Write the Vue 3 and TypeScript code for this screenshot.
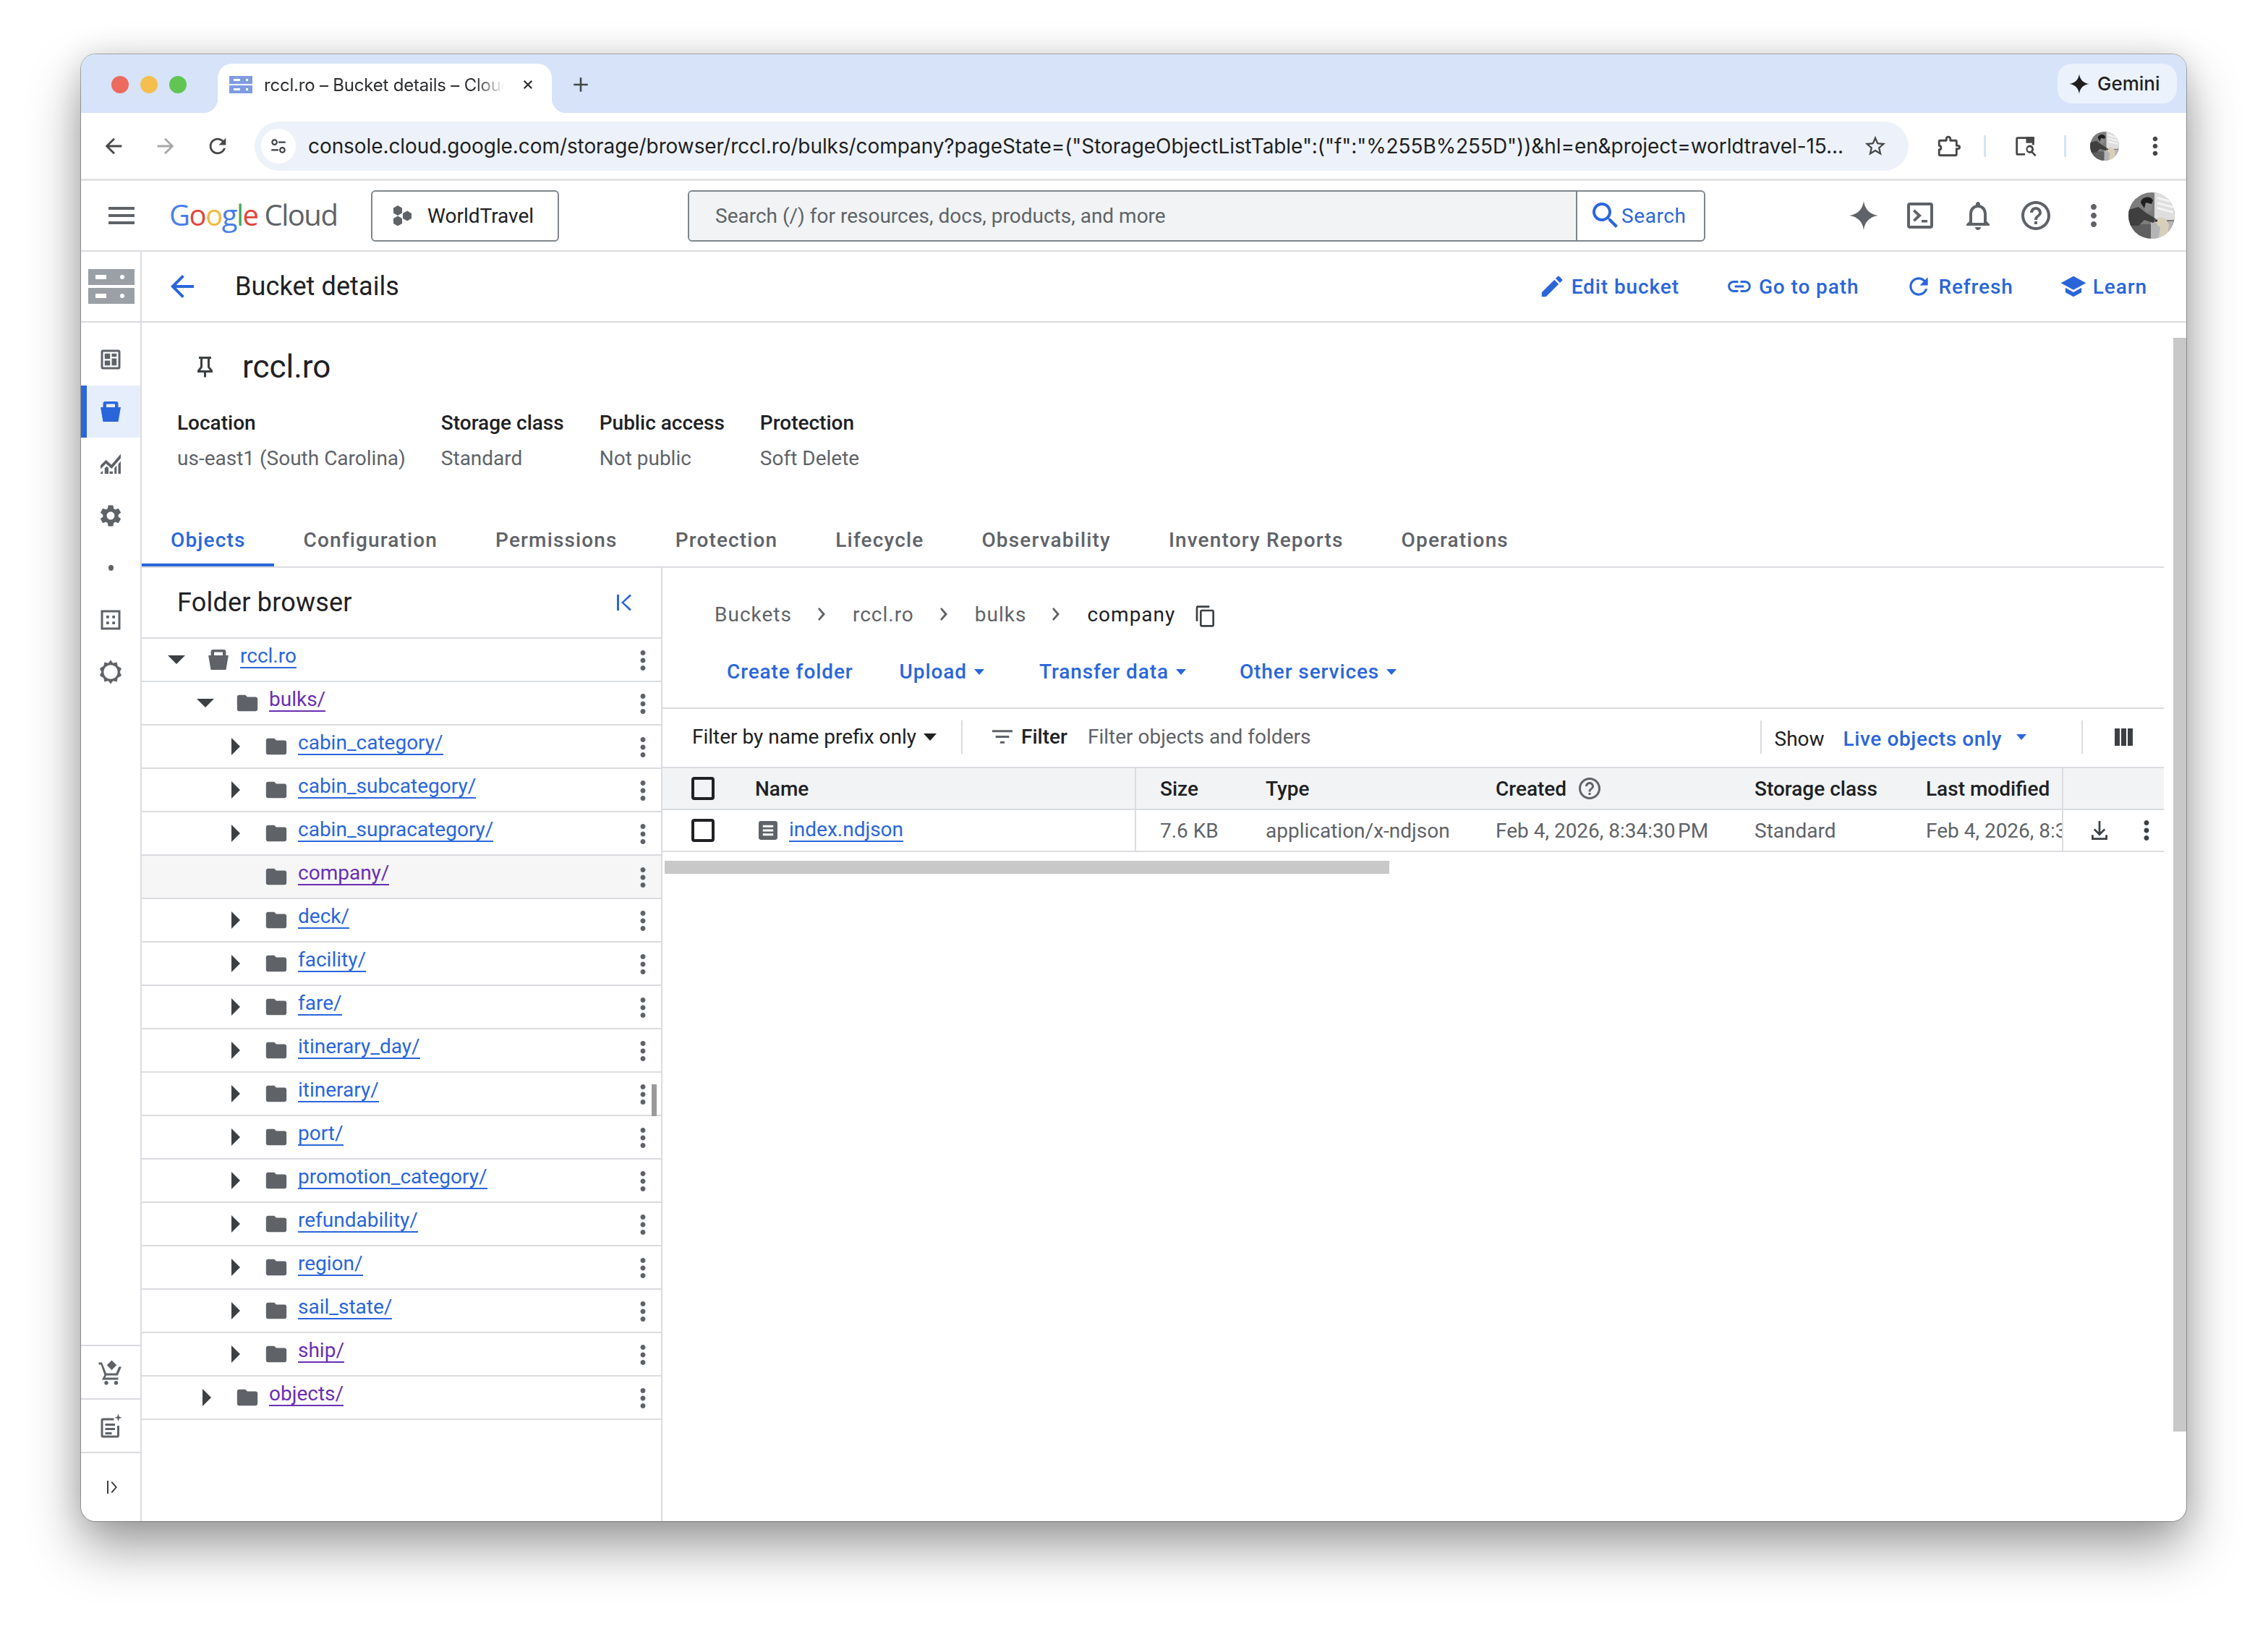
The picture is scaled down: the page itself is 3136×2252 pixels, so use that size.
<script setup lang="ts">
interface TreeRow {
  name: string
  level: number
  arrow: 'down' | 'right' | 'none'
  visited?: boolean
  selected?: boolean
  bucket?: boolean
}

const icons: Record<string, string> = {
  menu: 'M3 18h18v-2H3v2zm0-5h18v-2H3v2zm0-7v2h18V6H3z',
  back: 'M20 11H7.83l5.59-5.59L12 4l-8 8 8 8 1.41-1.41L7.83 13H20v-2z',
  forward: 'M4 11h12.17l-5.59-5.59L12 4l8 8-8 8-1.41-1.41L16.17 13H4v-2z',
  reload: 'M17.65 6.35C16.2 4.9 14.21 4 12 4c-4.42 0-7.99 3.58-7.99 8s3.57 8 7.99 8c3.73 0 6.84-2.55 7.73-6h-2.08c-.82 2.33-3.04 4-5.65 4-3.31 0-6-2.69-6-6s2.69-6 6-6c1.66 0 3.14.69 4.22 1.78L13 11h7V4l-2.35 2.35z',
  more: 'M12 8c1.1 0 2-.9 2-2s-.9-2-2-2-2 .9-2 2 .9 2 2 2zm0 2c-1.1 0-2 .9-2 2s.9 2 2 2 2-.9 2-2-.9-2-2-2zm0 6c-1.1 0-2 .9-2 2s.9 2 2 2 2-.9 2-2-.9-2-2-2z',
  folder: 'M10 4H4c-1.1 0-2 .9-2 2v12c0 1.1.9 2 2 2h16c1.1 0 2-.9 2-2V8c0-1.1-.9-2-2-2h-8l-2-2z',
  search: 'M15.5 14h-.79l-.28-.27C15.41 12.59 16 11.11 16 9.5 16 5.91 13.09 3 9.5 3S3 5.91 3 9.5 5.91 16 9.5 16c1.61 0 3.09-.59 4.23-1.57l.27.28v.79l5 4.99L20.49 19l-4.99-5zm-6 0C7.01 14 5 11.99 5 9.5S7.01 5 9.5 5 14 7.01 14 9.5 11.99 14 9.5 14z',
  edit: 'M3 17.25V21h3.75L17.81 9.94l-3.75-3.75L3 17.25zM20.71 7.04c.39-.39.39-1.02 0-1.41l-2.34-2.34c-.39-.39-1.02-.39-1.41 0l-1.83 1.83 3.75 3.75 1.83-1.83z',
  link: 'M3.9 12c0-1.71 1.39-3.1 3.1-3.1h4V7H7c-2.76 0-5 2.24-5 5s2.24 5 5 5h4v-1.9H7c-1.71 0-3.1-1.39-3.1-3.1zM8 13h8v-2H8v2zm9-6h-4v1.9h4c1.71 0 3.1 1.39 3.1 3.1s-1.39 3.1-3.1 3.1h-4V17h4c2.76 0 5-2.24 5-5s-2.24-5-5-5z',
  school: 'M5 13.18v4L12 21l7-3.82v-4L12 17l-7-3.82zM12 3L1 9l11 6 11-6L12 3z',
  bell: 'M12 22c1.1 0 2-.9 2-2h-4c0 1.1.9 2 2 2zm6-6v-5c0-3.07-1.63-5.64-4.5-6.32V4c0-.83-.67-1.5-1.5-1.5s-1.5.67-1.5 1.5v.68C7.64 5.36 6 7.92 6 11v5l-2 2v1h16v-1l-2-2zm-2 1H8v-6c0-2.48 1.51-4.5 4-4.5s4 2.02 4 4.5v6z',
  help: 'M11 18h2v-2h-2v2zm1-16C6.48 2 2 6.48 2 12s4.48 10 10 10 10-4.48 10-10S17.52 2 12 2zm0 18c-4.41 0-8-3.59-8-8s3.59-8 8-8 8 3.59 8 8-3.59 8-8 8zm0-14c-2.21 0-4 1.79-4 4h2c0-1.1.9-2 2-2s2 .9 2 2c0 2-3 1.75-3 5h2c0-2.25 3-2.5 3-5 0-2.21-1.79-4-4-4z',
  pin: 'M3 0h17v3h-2v11l4 5v3H13v6l-1.500 1L10 28v-6H1v-3l4-5V3H3zM8 3v12l-3 4h13l-3-4V3z',
  gear: 'M19.14 12.94c.04-.3.06-.61.06-.94 0-.32-.02-.64-.07-.94l2.03-1.58c.18-.14.23-.41.12-.61l-1.92-3.32c-.12-.22-.37-.29-.59-.22l-2.39.96c-.5-.38-1.03-.7-1.62-.94l-.36-2.54c-.04-.24-.24-.41-.48-.41h-3.84c-.24 0-.43.17-.47.41l-.36 2.54c-.59.24-1.13.57-1.62.94l-2.39-.96c-.22-.08-.47 0-.59.22L2.74 8.87c-.12.21-.08.47.12.61l2.03 1.58c-.05.3-.09.63-.09.94s.02.64.07.94l-2.03 1.58c-.18.14-.23.41-.12.61l1.92 3.32c.12.22.37.29.59.22l2.39-.96c.5.38 1.03.7 1.62.94l.36 2.54c.05.24.24.41.48.41h3.84c.24 0 .44-.17.47-.41l.36-2.54c.59-.24 1.13-.56 1.62-.94l2.39.96c.22.08.47 0 .59-.22l1.92-3.32c.12-.22.07-.47-.12-.61l-2.01-1.58zM12 15.6c-1.98 0-3.6-1.62-3.6-3.6s1.62-3.6 3.6-3.6 3.6 1.62 3.6 3.6-1.62 3.6-3.6 3.6z',
  download: 'M11 3h2v11.2l3.6-3.6L18 12l-6 6-6-6 1.4-1.4 3.6 3.6zM4 17h2v3h12v-3h2v5H4z',
  filter: 'M10 18h4v-2h-4v2zM3 6v2h18V6H3zm3 7h12v-2H6v2z',
  copy: 'M16 1H4c-1.1 0-2 .9-2 2v14h2V3h12V1zm3 4H8c-1.1 0-2 .9-2 2v14c0 1.1.9 2 2 2h11c1.1 0 2-.9 2-2V7c0-1.1-.9-2-2-2zm0 16H8V7h11v14z',
  file: 'M19 3H5c-1.1 0-2 .9-2 2v14c0 1.1.9 2 2 2h14c1.1 0 2-.9 2-2V5c0-1.1-.9-2-2-2zm-2 14H7v-2h10v2zm0-4H7v-2h10v2zm0-4H7V7h10v2z',
  star: 'M22 9.24l-7.19-.62L12 2 9.19 8.63 2 9.24l5.46 4.73L5.82 21 12 17.27 18.18 21l-1.63-7.03L22 9.24zM12 15.4l-3.76 2.27 1-4.28-3.32-2.88 4.38-.38L12 6.1l1.71 4.04 4.38.38-3.32 2.88 1 4.28L12 15.4z',
  spark: 'M12 1c.7 6.3 4.7 10.3 11 11-6.3.7-10.3 4.7-11 11-.7-6.3-4.7-10.3-11-11 6.3-.7 10.3-4.7 11-11z',
  bucket: 'M7 2.670h10a2 2 0 0 1 2 2V8h2.330l-2.330 13.330H5L2.670 8H5V4.670a2 2 0 0 1 2-2zM8 5v3h8V5z',
  dashboard: 'M5 3h14a2 2 0 0 1 2 2v14a2 2 0 0 1-2 2H5a2 2 0 0 1-2-2V5a2 2 0 0 1 2-2zM5 5h14v14H5zM6.500 6.500h5v5h-5zM13 6.500h4.500v3H13zM13 11h4.500v6.500H13zM6.500 13h5v4.500h-5z',
  chart: 'M2.700 13.500l5-5 5 4.500 8.600-10v4l-8.400 9.700-5.200-4.700-5 5zM2.700 20.500l2-2v2.800h-2zM6.500 16l2-1.500 1.500 1.400v5.400H6.500zM11 19.200h3v2.100h-3zM15.500 16l2-2.300v7.600h-2zM19 12.300l2.300-2.600v11.600H19z',
  grid: 'M3 3h18v18H3zm2 2v14h14V5zm3 3h2.500v2.500H8zm5.500 0H16v2.500h-2.500zM8 13.500h2.500V16H8zm5.500 0H16V16h-2.500z',
  sun: 'M12 1l2.200 2.800 3.500-.800.800 3.500L22 8.700 20.500 12l1.500 3.300-3.500 2.200-.800 3.500-3.500-.800L12 23l-2.200-2.800-3.500.800-.800-3.500L2 15.300 3.500 12 2 8.700l3.500-2.200.800-3.500 3.500.800zm0 4.500a6.500 6.500 0 1 0 0 13 6.500 6.500 0 0 0 0-13z',
  cart: 'M13 1l4.500 4.500L13 10 8.500 5.500zM1 3h3l4 10h9l2.500-6H22l-3.500 8H8l-1 2h12v2H4l2.300-4.500L3 5H1zM8 20a1.800 1.800 0 1 1 0 3.600A1.800 1.800 0 0 1 8 20zm9 0a1.800 1.800 0 1 1 0 3.600 1.800 1.800 0 0 1 0-3.600z',
  notes: 'M5 5h10v2H5v14h13v-9h2v9a2 2 0 0 1-2 2H5a2 2 0 0 1-2-2V7a2 2 0 0 1 2-2zm2 5h9v2H7zm0 4h9v2H7zm0 4h6v2H7zM19 1l.9 2.600L22.500 4.500l-2.600.9L19 8l-.9-2.600-2.600-.9 2.600-.9z'
}

const railTop = [
  { icon: 'dashboard' },
  { icon: 'bucket', active: true },
  { icon: 'chart' },
  { icon: 'gear' },
  { icon: 'dot' },
  { icon: 'grid' },
  { icon: 'sun' }
]

const details = [
  { label: 'Location', value: 'us-east1 (South Carolina)' },
  { label: 'Storage class', value: 'Standard' },
  { label: 'Public access', value: 'Not public' },
  { label: 'Protection', value: 'Soft Delete' }
]

const tabs = ['Objects', 'Configuration', 'Permissions', 'Protection', 'Lifecycle', 'Observability', 'Inventory Reports', 'Operations']

const pageActions = [
  { icon: 'edit', label: 'Edit bucket' },
  { icon: 'link', label: 'Go to path' },
  { icon: 'reload', label: 'Refresh' },
  { icon: 'school', label: 'Learn' }
]

const logoLetters = [
  { ch: 'G', color: '#4a7fe8' },
  { ch: 'o', color: '#e0473c' },
  { ch: 'o', color: '#f4b93f' },
  { ch: 'g', color: '#4a7fe8' },
  { ch: 'l', color: '#45a85c' },
  { ch: 'e', color: '#e0473c' }
]

const tree: TreeRow[] = [
  { name: 'rccl.ro', level: 0, arrow: 'down', bucket: true },
  { name: 'bulks/', level: 1, arrow: 'down', visited: true },
  { name: 'cabin_category/', level: 2, arrow: 'right' },
  { name: 'cabin_subcategory/', level: 2, arrow: 'right' },
  { name: 'cabin_supracategory/', level: 2, arrow: 'right' },
  { name: 'company/', level: 2, arrow: 'none', visited: true, selected: true },
  { name: 'deck/', level: 2, arrow: 'right' },
  { name: 'facility/', level: 2, arrow: 'right' },
  { name: 'fare/', level: 2, arrow: 'right' },
  { name: 'itinerary_day/', level: 2, arrow: 'right' },
  { name: 'itinerary/', level: 2, arrow: 'right' },
  { name: 'port/', level: 2, arrow: 'right' },
  { name: 'promotion_category/', level: 2, arrow: 'right' },
  { name: 'refundability/', level: 2, arrow: 'right' },
  { name: 'region/', level: 2, arrow: 'right' },
  { name: 'sail_state/', level: 2, arrow: 'right' },
  { name: 'ship/', level: 2, arrow: 'right', visited: true },
  { name: 'objects/', level: 1, arrow: 'right', visited: true }
]

const crumbs = ['Buckets', 'rccl.ro', 'bulks']
const objectActions = [
  { label: 'Upload', gap: 64 },
  { label: 'Transfer data', gap: 76 },
  { label: 'Other services', gap: 74 }
]
// Chrome formats the time with a narrow no-break space before PM
const stamp = 'Feb 4, 2026, 8:34:30\u202fPM'
</script>

<template>
  <div class="page">
    <div class="window">
      <div class="tabstrip">
        <div class="lights">
          <i class="light red"></i><i class="light amber"></i><i class="light green"></i>
        </div>
        <div class="tab">
          <svg class="tab-icon" viewBox="0 0 32 24">
            <path fill="#7f9ce0" d="M0 0h32v11H0zM0 13h32v11H0z" />
            <path fill="#fff" d="M6 4h9v3H6zM6 17h9v3H6zM23 4h3v3h-3zM23 17h3v3h-3z" />
          </svg>
          <span class="tab-title">rccl.ro – Bucket details – Cloud Storage</span>
          <svg class="tab-close" viewBox="0 0 24 24"><path d="M5 5l14 14M19 5L5 19" /></svg>
        </div>
        <svg class="tab-plus" viewBox="0 0 24 24"><path d="M12 3v18M3 12h18" /></svg>
        <div class="gemini">
          <svg viewBox="0 0 24 24"><path :d="icons.spark" /></svg>
          <span>Gemini</span>
        </div>
      </div>

      <div class="toolbar">
        <svg class="tb-icon" viewBox="0 0 24 24"><path :d="icons.back" /></svg>
        <svg class="tb-icon off" viewBox="0 0 24 24"><path :d="icons.forward" /></svg>
        <svg class="tb-icon" viewBox="0 0 24 24"><path :d="icons.reload" /></svg>
        <div class="omnibox">
          <span class="tune">
            <svg viewBox="0 0 24 24">
              <circle cx="7" cy="7" r="3" fill="none" stroke="#3c4043" stroke-width="2" />
              <circle cx="17" cy="17" r="3" fill="none" stroke="#3c4043" stroke-width="2" />
              <path fill="#3c4043" d="M12 6h9v2h-9zM3 16h9v2H3z" />
            </svg>
          </span>
          <span class="url">console.cloud.google.com/storage/browser/rccl.ro/bulks/company?pageState=("StorageObjectListTable":("f":"%255B%255D"))&amp;hl=en&amp;project=worldtravel-15...</span>
          <svg class="omni-star" viewBox="0 0 24 24"><path :d="icons.star" /></svg>
        </div>
        <svg class="ext" viewBox="0 0 24 24">
          <path d="M4 6.500h6V5a2 2 0 0 1 4 0v1.500h5a1 1 0 0 1 1 1v4h1.500a1.500 1.500 0 0 1 0 3H20V20a1 1 0 0 1-1 1H4a1 1 0 0 1-1-1v-4.500c2.500 0 2.500-4 0-4V7.500a1 1 0 0 1 1-1z" />
        </svg>
        <i class="tb-sep"></i>
        <svg class="tb-icon tabsearch" viewBox="0 0 24 24">
          <path d="M3 5a2 2 0 0 1 2-2h16v8h-2V5H5v14h7v2H5a2 2 0 0 1-2-2z" />
          <path d="M13 3h8v6h-8z" />
          <path d="M16.500 11a4 4 0 0 1 3.200 6.400L23 20.700 21.700 22l-3.300-3.300A4 4 0 1 1 16.500 11zm0 2a2 2 0 1 0 0 4 2 2 0 0 0 0-4z" />
        </svg>
        <i class="tb-sep second"></i>
        <svg class="avatar small" viewBox="0 0 64 64">
          <g id="user-photo">
            <rect width="64" height="64" fill="#7d7d7d" />
            <path fill="#dedede" d="M36 0h28v38H36z" />
            <path fill="#f4f4f4" d="M40 6l22 6v3l-22-6zM40 13l22 6v3l-22-6zM40 20l22 6v3l-22-6z" />
            <path fill="#b4b4b4" d="M31 40h33v24H31z" />
            <path fill="#5f5f5f" d="M0 44h31v20H0z" />
            <path fill="#3f3f3f" d="M0 24l14-4 10 8 10 6 6 4-6 4-12-4-8 8H0z" />
            <path fill="#8a8a8a" d="M24 12l9 2-1 10-7 4-5-8z" />
            <path fill="#1e1e1e" d="M17 14a9 8 0 0 1 17-3l-2 5-8-2-2 8z" />
            <path fill="#d8cfbb" d="M36 38l8-4 8 3 4 8-2 17H42l2-14-4-3z" />
            <path fill="#2f2f2f" d="M37 37.500h3v3h-3z" />
          </g>
        </svg>
        <svg class="tb-icon dots" viewBox="0 0 24 24"><path :d="icons.more" /></svg>
      </div>

      <header class="gcp-bar">
        <svg class="gcp-menu" viewBox="0 0 24 24"><path :d="icons.menu" /></svg>
        <div class="logo">
          <span v-for="(l, i) in logoLetters" :key="i" :style="{ color: l.color }">{{ l.ch }}</span>
          <span class="logo-cloud">Cloud</span>
        </div>
        <div class="project">
          <svg viewBox="0 0 26 28">
            <path fill="#5f6368" d="M7 0l6 3.500v7L7 14l-6-3.500v-7zM7 14.500l6 3.500v7L7 28.500l-6-3.500v-7zM20 7.500l6 3.500v7l-6 3.500-6-3.500v-7z" />
          </svg>
          <span>WorldTravel</span>
        </div>
        <div class="searchbox">
          <div class="search-input">Search (/) for resources, docs, products, and more</div>
          <div class="search-btn">
            <svg viewBox="3 3 18 18"><path :d="icons.search" /></svg>
            <span>Search</span>
          </div>
        </div>
        <div class="gcp-icons">
          <svg class="gi spark" viewBox="0 0 24 24"><path :d="icons.spark" /></svg>
          <svg class="gi" viewBox="0 0 24 24">
            <path d="M5 3h14a2 2 0 0 1 2 2v14a2 2 0 0 1-2 2H5a2 2 0 0 1-2-2V5a2 2 0 0 1 2-2zm0 2v14h14V5z" />
            <path d="M7 9l1.300-1.300L13 12l-4.700 4.300L7 15l3-3zM13 15h4v1.800h-4z" />
          </svg>
          <svg class="gi" viewBox="0 0 24 24"><path :d="icons.bell" /></svg>
          <svg class="gi" viewBox="0 0 24 24"><path :d="icons.help" /></svg>
          <svg class="gi" viewBox="0 0 24 24"><path :d="icons.more" /></svg>
        </div>
        <svg class="avatar large" viewBox="0 0 64 64"><use href="#user-photo" /></svg>
      </header>

      <div class="console">
        <aside class="rail">
          <div class="rail-logo">
            <svg viewBox="0 0 64 48">
              <path fill="#9aa0a6" d="M0 0h64v22H0zM0 26h64v22H0z" />
              <path fill="#fff" d="M10 8h15v6H10zM10 34h15v6H10z" />
              <circle cx="47" cy="11" r="3" fill="#fff" /><circle cx="47" cy="37" r="3" fill="#fff" />
            </svg>
          </div>
          <div class="rail-nav">
            <div v-for="item in railTop" :key="item.icon" class="rail-item" :class="{ active: item.active }">
              <i v-if="item.icon === 'dot'" class="rail-dot"></i>
              <svg v-else viewBox="0 0 24 24"><path fill-rule="evenodd" :d="icons[item.icon]" /></svg>
            </div>
          </div>
          <div class="rail-bottom">
            <div class="rail-foot"><svg viewBox="0 0 24 24"><path :d="icons.cart" /></svg></div>
            <div class="rail-foot"><svg viewBox="0 0 24 24"><path :d="icons.notes" /></svg></div>
            <div class="rail-foot last">
              <svg class="expand" viewBox="0 0 20 20"><path d="M2 1h2v18H2zM9 2l7 8-7 8-1.500-1.300L13.500 10 7.500 3.300z" /></svg>
            </div>
          </div>
        </aside>

        <main class="main">
          <div class="subhead">
            <svg class="sub-back" viewBox="4 4 16 16"><path :d="icons.back" /></svg>
            <h1 class="sub-title">Bucket details</h1>
            <div class="sub-actions">
              <div v-for="a in pageActions" :key="a.label" class="sub-action">
                <svg viewBox="0 0 24 24"><path :d="icons[a.icon]" /></svg>
                <span>{{ a.label }}</span>
              </div>
            </div>
          </div>

          <div class="scroller">
            <div class="content">
              <div class="bucket-name">
                <svg viewBox="0 0 23 29"><path fill-rule="evenodd" :d="icons.pin" /></svg>
                <h2>rccl.ro</h2>
              </div>
              <div class="details">
                <div v-for="d in details" :key="d.label" class="detail">
                  <div class="detail-label">{{ d.label }}</div>
                  <div class="detail-value">{{ d.value }}</div>
                </div>
              </div>
              <nav class="tabs">
                <div v-for="(t, i) in tabs" :key="t" class="tab-link" :class="{ current: i === 0 }">{{ t }}</div>
              </nav>

              <div class="split">
                <section class="browser">
                  <div class="browser-head">
                    <h3>Folder browser</h3>
                    <svg viewBox="0 0 26 24"><path d="M2 1h3v22H2zM22 2.500L11.500 12 22 21.500l-2 1.900L8 12 20 .6z" /></svg>
                  </div>
                  <div class="tree">
                    <div
                      v-for="row in tree"
                      :key="row.name"
                      class="tree-row"
                      :class="{ selected: row.selected }"
                      :style="{ paddingLeft: 24 + row.level * 40 + 'px' }"
                    >
                      <span class="twist">
                        <svg v-if="row.arrow === 'down'" class="tri-down" viewBox="0 0 24 12"><path d="M0 0h24L12 12z" /></svg>
                        <svg v-else-if="row.arrow === 'right'" class="tri-right" viewBox="0 0 12 24"><path d="M0 0l12 12L0 24z" /></svg>
                      </span>
                      <svg v-if="row.bucket" class="node bucket-node" viewBox="2.600 2.600 18.800 18.800"><path fill-rule="evenodd" :d="icons.bucket" /></svg>
                      <svg v-else class="node" viewBox="0 0 24 24"><path :d="icons.folder" /></svg>
                      <a class="node-link" :class="{ visited: row.visited }">{{ row.name }}</a>
                      <svg class="node-more" viewBox="0 0 24 24"><path :d="icons.more" /></svg>
                    </div>
                    <i class="tree-thumb"></i>
                  </div>
                </section>

                <section class="objects">
                  <div class="crumbs">
                    <template v-for="c in crumbs" :key="c">
                      <span class="crumb">{{ c }}</span>
                      <svg class="crumb-sep" viewBox="0 0 12 20"><path d="M2 1l8 9-8 9-2-1.700L6 10 0 2.700z" /></svg>
                    </template>
                    <span class="crumb now">company</span>
                    <svg class="crumb-copy" viewBox="0 0 24 24"><path :d="icons.copy" /></svg>
                  </div>
                  <div class="obj-actions">
                    <span class="obj-action">Create folder</span>
                    <span v-for="a in objectActions" :key="a.label" class="obj-action drop" :style="{ marginLeft: a.gap + 'px' }">
                      {{ a.label }}<i class="caret"></i>
                    </span>
                  </div>
                  <div class="filterbar">
                    <span class="prefix">Filter by name prefix only</span><i class="caret dark"></i>
                    <i class="fb-sep"></i>
                    <svg class="filter-icon" viewBox="3 6 18 12"><path :d="icons.filter" /></svg>
                    <span class="filter-label">Filter</span>
                    <span class="filter-hint">Filter objects and folders</span>
                    <i class="fb-sep push"></i>
                    <span class="show">Show</span>
                    <span class="live">Live objects only</span><i class="caret live-caret"></i>
                    <i class="fb-sep last"></i>
                    <svg class="columns" viewBox="0 0 25 24"><path d="M0 0h7v24H0zM9 0h7v24H9zM18 0h7v24h-7z" /></svg>
                  </div>
                  <div class="table">
                    <div class="tr th">
                      <div class="cell check"><i class="box"></i></div>
                      <div class="cell name sep">Name</div>
                      <div class="cell pad">Size</div>
                      <div class="cell pad">Type</div>
                      <div class="cell pad">Created<svg class="help" viewBox="2 2 20 20"><path :d="icons.help" /></svg></div>
                      <div class="cell pad">Storage class</div>
                      <div class="cell pad sep">Last modified</div>
                      <div class="cell"></div>
                    </div>
                    <div class="tr td">
                      <div class="cell check"><i class="box"></i></div>
                      <div class="cell name sep">
                        <svg class="file-icon" viewBox="3 3 18 18"><path :d="icons.file" /></svg>
                        <a class="node-link">index.ndjson</a>
                      </div>
                      <div class="cell pad">7.6 KB</div>
                      <div class="cell pad">application/x-ndjson</div>
                      <div class="cell pad">{{ stamp }}</div>
                      <div class="cell pad">Standard</div>
                      <div class="cell pad sep">{{ stamp }}</div>
                      <div class="cell tools">
                        <svg class="dl" viewBox="4 3 16 19"><path :d="icons.download" /></svg>
                        <svg class="row-more" viewBox="0 0 24 24"><path :d="icons.more" /></svg>
                      </div>
                    </div>
                  </div>
                  <div class="hbar"></div>
                </section>
              </div>
            </div>
            <div class="vbar"></div>
          </div>
        </main>
      </div>
    </div>
  </div>
</template>

<style scoped>
.page {
  padding: 75px 0 148px 112px;
  font-family: Roboto, "Liberation Sans", sans-serif;
  color: #202124;
}

.window {
  width: 2911px;
  height: 2028px;
  border-radius: 20px;
  overflow: hidden;
  background: #fff;
  display: flex;
  flex-direction: column;
  box-shadow: 0 0 0 1px rgba(0, 0, 0, 0.28), 0 36px 72px rgba(0, 0, 0, 0.38), 0 0 40px rgba(0, 0, 0, 0.12);
}

svg {
  display: block;
  flex: none;
  fill: currentColor;
}

/* browser tabs */
.tabstrip {
  height: 81px;
  flex: none;
  background: #d6e3f9;
  display: flex;
  position: relative;
}

.lights {
  display: flex;
  gap: 16px;
  padding: 30px 0 0 42px;
  width: 189px;
  box-sizing: border-box;
}

.light {
  width: 24px;
  height: 24px;
  border-radius: 50%;
}

.red { background: #ed6a5e; }
.amber { background: #f5bf4f; }
.green { background: #61c554; }

.tab {
  width: 462px;
  height: 68px;
  margin-top: 13px;
  background: #fff;
  border-radius: 20px 20px 0 0;
  display: flex;
  align-items: center;
  padding: 0 24px 10px 16px;
  box-sizing: border-box;
  position: relative;
}

.tab::before,
.tab::after {
  content: '';
  position: absolute;
  bottom: 0;
  width: 20px;
  height: 20px;
}

.tab::before {
  left: -20px;
  background: radial-gradient(circle at 0 0, #d6e3f9 20px, #fff 20.5px);
}

.tab::after {
  right: -20px;
  background: radial-gradient(circle at 100% 0, #d6e3f9 20px, #fff 20.5px);
}

.tab-icon {
  width: 32px;
  height: 24px;
}

.tab-title {
  margin-left: 16px;
  width: 335px;
  font-family: Inter, sans-serif;
  font-size: 24px;
  letter-spacing: -0.2px;
  color: #2b2d30;
  white-space: nowrap;
  overflow: hidden;
  -webkit-mask-image: linear-gradient(90deg, #000 88%, transparent);
  mask-image: linear-gradient(90deg, #000 88%, transparent);
}

.tab-close {
  width: 18px;
  height: 18px;
  margin-left: 24px;
  fill: none;
  stroke: #2b2d30;
  stroke-width: 3;
}

.tab-plus {
  width: 26px;
  height: 26px;
  margin: 29px 0 0 27px;
  fill: none;
  stroke: #44474a;
  stroke-width: 2.400;
}

.gemini {
  position: absolute;
  left: 2733px;
  top: 13px;
  width: 165px;
  height: 55px;
  border-radius: 20px;
  background: #ecf2fc;
  display: flex;
  align-items: center;
  padding-left: 15px;
  box-sizing: border-box;
  font-family: Inter, sans-serif;
  font-size: 26px;
  font-weight: 500;
  color: #1f1f1f;
}

.gemini svg {
  width: 30px;
  height: 30px;
  margin-right: 10px;
}

/* browser toolbar */
.toolbar {
  height: 94px;
  flex: none;
  border-bottom: 3px solid #e3e3e3;
  display: flex;
  align-items: center;
  box-sizing: border-box;
  padding-left: 28px;
}

.tb-icon {
  width: 34px;
  height: 34px;
  color: #474747;
  margin-right: 38px;
}

.tb-icon.off {
  color: #a8a8a8;
}

.omnibox {
  width: 2287px;
  height: 68px;
  margin-left: -4px;
  margin-right: 38px;
  border-radius: 34px;
  background: #edf2fa;
  display: flex;
  align-items: center;
  flex: none;
}

.tune {
  width: 48px;
  height: 48px;
  margin-left: 9px;
  border-radius: 50%;
  background: #fff;
  display: flex;
  align-items: center;
  justify-content: center;
  flex: none;
}

.tune svg {
  width: 26px;
  height: 26px;
}

.url {
  margin-left: 17px;
  width: 2124px;
  font-family: Inter, sans-serif;
  font-size: 28px;
  letter-spacing: -0.08px;
  color: #1f1f1f;
  white-space: nowrap;
  overflow: hidden;
  flex: none;
}

.omni-star {
  width: 34px;
  height: 34px;
  margin-left: 26px;
  color: #474747;
}

.ext {
  width: 34px;
  height: 34px;
  fill: none;
  stroke: #474747;
  stroke-width: 2;
  stroke-linejoin: round;
}

.tb-sep {
  width: 3px;
  height: 30px;
  margin-left: 32px;
  background: #d6e3f9;
  flex: none;
}

.tabsearch {
  margin: 0 0 0 37px;
  width: 34px;
  height: 34px;
}

.tb-sep.second {
  margin-left: 37px;
}

.avatar {
  border-radius: 50%;
  flex: none;
}

.avatar.small {
  width: 40px;
  height: 40px;
  margin-left: 33px;
}

.dots {
  margin: 0 0 0 30px;
  width: 40px;
  height: 40px;
}

/* cloud console bar */
.gcp-bar {
  height: 98px;
  flex: none;
  border-bottom: 2px solid #dadce0;
  display: flex;
  align-items: center;
  padding-left: 40px;
  box-sizing: border-box;
}

.gcp-menu {
  width: 48px;
  height: 48px;
  color: #5f6368;
  margin-right: 42px;
  margin-left: -8px;
}

.logo {
  width: 279px;
  font-family: "Open Sans", sans-serif;
  font-size: 40px;
  letter-spacing: -1.5px;
  white-space: nowrap;
  margin-top: -4px;
}

.logo-cloud {
  color: #5f6368;
  margin-left: 9px;
}

.project {
  width: 260px;
  height: 71px;
  border: 2px solid #80868b;
  border-radius: 6px;
  box-sizing: border-box;
  display: flex;
  align-items: center;
  padding-left: 28px;
  font-size: 28px;
}

.project svg {
  width: 26px;
  height: 28px;
  margin-right: 22px;
}

.searchbox {
  width: 1407px;
  height: 71px;
  margin-left: 178px;
  border: 2px solid #80868b;
  border-radius: 6px;
  box-sizing: border-box;
  display: flex;
  overflow: hidden;
}

.search-input {
  width: 1228px;
  background: #f1f3f4;
  border-right: 2px solid #80868b;
  box-sizing: border-box;
  padding-left: 36px;
  display: flex;
  align-items: center;
  font-size: 28px;
  color: #5f6368;
}

.search-btn {
  display: flex;
  align-items: center;
  color: #2a66da;
  font-size: 28px;
  letter-spacing: 0.6px;
  padding-left: 21px;
}

.search-btn svg {
  width: 36px;
  height: 36px;
  margin-right: 4px;
}

.gcp-icons {
  display: flex;
  align-items: center;
  gap: 32px;
  margin-left: 197px;
  color: #5f6368;
}

.gi {
  width: 48px;
  height: 48px;
}

.gi.spark {
  width: 44px;
  height: 44px;
}

.avatar.large {
  width: 64px;
  height: 64px;
  margin-left: 24px;
}

/* shell */
.console {
  flex: 1;
  min-height: 0;
  display: flex;
}

.rail {
  width: 84px;
  flex: none;
  border-right: 2px solid #dadce0;
  box-sizing: border-box;
  display: flex;
  flex-direction: column;
  color: #5f6368;
}

.rail-logo {
  height: 98px;
  flex: none;
  display: flex;
  align-items: center;
  padding-left: 10px;
  box-sizing: border-box;
  border-bottom: 2px solid #dadce0;
  margin-right: -2px;
}

.rail-logo svg {
  width: 64px;
  height: 48px;
}

.rail-nav {
  padding-top: 15px;
}

.rail-item {
  height: 72px;
  display: flex;
  align-items: center;
  justify-content: center;
}

.rail-item svg {
  width: 36px;
  height: 36px;
}

.rail-item.active {
  background: #e6eefc;
  box-shadow: inset 8px 0 0 #2a66da;
  color: #2a66da;
}

.rail-dot {
  width: 7px;
  height: 8px;
  border-radius: 50%;
  background: #5f6368;
}

.rail-bottom {
  margin-top: auto;
}

.rail-foot {
  height: 72px;
  border-top: 2px solid #dadce0;
  display: flex;
  align-items: center;
  justify-content: center;
}

.rail-foot svg {
  width: 36px;
  height: 36px;
}

.rail-foot.last {
  height: 94px;
}

.rail-foot svg.expand {
  width: 20px;
  height: 20px;
  margin-left: 5px;
  color: #3c4043;
}

.main {
  flex: 1;
  min-width: 0;
  display: flex;
  flex-direction: column;
}

.subhead {
  height: 98px;
  flex: none;
  border-bottom: 2px solid #dadce0;
  box-sizing: border-box;
  display: flex;
  align-items: center;
  padding-left: 40px;
}

.sub-back {
  width: 32px;
  height: 32px;
  color: #2a66da;
}

.sub-title {
  margin: 0 0 0 57px;
  font-size: 36px;
  font-weight: 400;
  letter-spacing: 0.1px;
  color: #202124;
}

.sub-actions {
  margin-left: auto;
  display: flex;
  align-items: center;
  color: #2a66da;
  font-size: 28px;
  font-weight: 500;
  letter-spacing: 0.9px;
  padding-right: 54px;
  gap: 64px;
}

.sub-action {
  display: flex;
  align-items: center;
  gap: 8px;
}

.sub-action svg {
  width: 38px;
  height: 38px;
}

.scroller {
  flex: 1;
  min-height: 0;
  display: flex;
}

.content {
  width: 2796px;
  flex: none;
  display: flex;
  flex-direction: column;
  min-height: 0;
}

.vbar {
  width: 18px;
  height: 1512px;
  margin: 21px 0 0 13px;
  background: #c8c8c8;
  flex: none;
}

.bucket-name {
  height: 116px;
  padding-top: 3px;
  flex: none;
  display: flex;
  align-items: center;
  padding-left: 76px;
}

.bucket-name svg {
  width: 23px;
  height: 29px;
  color: #3c4043;
}

.bucket-name h2 {
  margin: 0 0 0 40px;
  font-size: 44px;
  font-weight: 400;
}

.details {
  display: flex;
  gap: 49px;
  padding: 0 0 0 49px;
  flex: none;
}

.detail-label {
  font-size: 28px;
  line-height: 40px;
  font-weight: 500;
}

.detail-value {
  font-size: 28px;
  line-height: 40px;
  margin-top: 9px;
  color: #5f6368;
}

.tabs {
  margin-top: 53px;
  height: 78px;
  flex: none;
  display: flex;
  border-bottom: 2px solid #dadce0;
  box-sizing: border-box;
}

.tab-link {
  padding: 2px 40px 0;
  height: 76px;
  box-sizing: border-box;
  display: flex;
  align-items: center;
  font-size: 28px;
  font-weight: 500;
  letter-spacing: 1.15px;
  color: #5f6368;
}

.tab-link.current {
  color: #2a66da;
  box-shadow: inset 0 -4px 0 #2a66da;
}

.split {
  flex: 1;
  min-height: 0;
  display: flex;
}

/* folder tree */
.browser {
  width: 720px;
  flex: none;
  border-right: 2px solid #dadce0;
  box-sizing: border-box;
}

.browser-head {
  height: 96px;
  border-bottom: 2px solid #dadce0;
  display: flex;
  align-items: center;
  padding-left: 49px;
  box-sizing: content-box;
}

.browser-head h3 {
  margin: 0;
  font-size: 36px;
  font-weight: 400;
  letter-spacing: 0.2px;
}

.browser-head svg {
  width: 26px;
  height: 24px;
  margin-left: auto;
  margin-right: 37px;
  color: #2a66da;
}

.tree {
  position: relative;
}

.tree-row {
  height: 60px;
  border-bottom: 2px solid #dadce0;
  box-sizing: border-box;
  display: flex;
  align-items: center;
}

.tree-row.selected {
  background: #f5f6f5;
}

.twist {
  width: 48px;
  flex: none;
  display: flex;
  justify-content: center;
  color: #3c4043;
}

.tri-down {
  width: 24px;
  height: 12px;
}

.tri-right {
  width: 12px;
  height: 24px;
  margin-left: 3px;
}

.node {
  width: 34px;
  height: 34px;
  margin-left: 17px;
  margin-right: 13px;
  color: #5f6368;
}

.bucket-node {
  width: 28px;
  height: 28px;
  margin-left: 20px;
  margin-right: 16px;
}

.node-link {
  font-size: 28px;
  line-height: 30px;
  color: #2a66da;
  border-bottom: 2px solid currentColor;
  white-space: nowrap;
}

.tree-row .node-link {
  margin-bottom: 8px;
}

.node-link.visited {
  color: #6a2eb4;
}

.node-more {
  width: 42px;
  height: 42px;
  margin-left: auto;
  margin-right: 4px;
  margin-top: 2px;
  color: #5f6368;
  flex: none;
}

.tree-thumb {
  position: absolute;
  right: 6px;
  top: 616px;
  width: 7px;
  height: 44px;
  background: #9a9a9a;
}

/* objects pane */
.objects {
  flex: 1;
  min-width: 0;
}

.crumbs {
  height: 64px;
  padding-top: 32px;
  display: flex;
  align-items: center;
  padding-left: 72px;
  font-size: 28px;
  letter-spacing: 1px;
}

.crumb {
  color: #5f6368;
}

.crumb.now {
  color: #202124;
}

.crumb-sep {
  width: 12px;
  height: 20px;
  margin: 0 36px 0 36px;
  color: #5f6368;
}

.crumb-copy {
  width: 32px;
  height: 32px;
  color: #3c4043;
  margin: 6px 0 0 26px;
}

.obj-actions {
  height: 97px;
  border-bottom: 2px solid #dadce0;
  box-sizing: content-box;
  display: flex;
  align-items: center;
  padding-left: 89px;
  font-size: 28px;
  font-weight: 500;
  letter-spacing: 0.9px;
  color: #2a66da;
}

.obj-action {
  display: flex;
  align-items: center;
  margin-top: -2px;
}

.caret {
  width: 0;
  height: 0;
  border-left: 7px solid transparent;
  border-right: 7px solid transparent;
  border-top: 8px solid currentColor;
  margin-left: 10px;
  flex: none;
}

.filterbar {
  height: 77px;
  padding-bottom: 3px;
  border-bottom: 2px solid #dadce0;
  display: flex;
  align-items: center;
  padding-left: 41px;
  font-size: 28px;
}

.caret.dark {
  color: #202124;
  border-left-width: 9px;
  border-right-width: 9px;
  border-top-width: 10px;
  margin-left: 10px;
}

.fb-sep {
  width: 2px;
  height: 46px;
  background: #dadce0;
  flex: none;
  margin-left: 34px;
}

.filter-icon {
  width: 28px;
  height: 19px;
  color: #5f6368;
  margin-left: 41px;
}

.filter-label {
  margin-left: 12px;
  font-weight: 500;
}

.filter-hint {
  margin-left: 28px;
  color: #5f6368;
}

.fb-sep.push {
  margin-left: auto;
}

.show {
  margin-left: 18px;
  margin-top: 5px;
}

.live {
  margin-left: 26px;
  margin-top: 5px;
  color: #2a66da;
  font-weight: 500;
  letter-spacing: 0.6px;
}

.live-caret {
  color: #2a66da;
  margin-left: 20px;
}

.fb-sep.last {
  margin-left: 76px;
}

.columns {
  width: 25px;
  height: 24px;
  color: #3c4043;
  margin: 0 43px 0 44px;
}

.tr {
  display: grid;
  grid-template-columns: 128px 527px 146px 318px 358px 237px 223px 139px;
  border-bottom: 2px solid #dadce0;
  box-sizing: border-box;
  font-size: 28px;
}

.th {
  height: 58px;
  background: #f1f3f4;
  font-weight: 500;
}

.td {
  height: 58px;
  color: #5f6368;
}

.cell {
  display: flex;
  align-items: center;
  min-width: 0;
  overflow: hidden;
  white-space: nowrap;
}

.check {
  padding-left: 40px;
}

.box {
  width: 32px;
  height: 32px;
  border: 4px solid #202124;
  border-radius: 4px;
  box-sizing: border-box;
  flex: none;
}

.sep {
  border-right: 2px solid #dadce0;
}

.pad {
  padding-left: 33px;
}

.help {
  width: 30px;
  height: 30px;
  color: #5f6368;
  margin-left: 17px;
}

.file-icon {
  width: 26px;
  height: 28px;
  color: #5f6368;
  margin: 0 16px 0 5px;
}

.tools {
  padding-left: 38px;
}

.dl {
  width: 24px;
  height: 26px;
  color: #3c4043;
}

.row-more {
  width: 42px;
  height: 42px;
  margin-left: 32px;
  color: #3c4043;
}

.hbar {
  width: 1002px;
  height: 18px;
  margin: 12px 0 0 3px;
  background: #c8c8c8;
}
</style>

<style>
body {
  background: #fff;
}
</style>
